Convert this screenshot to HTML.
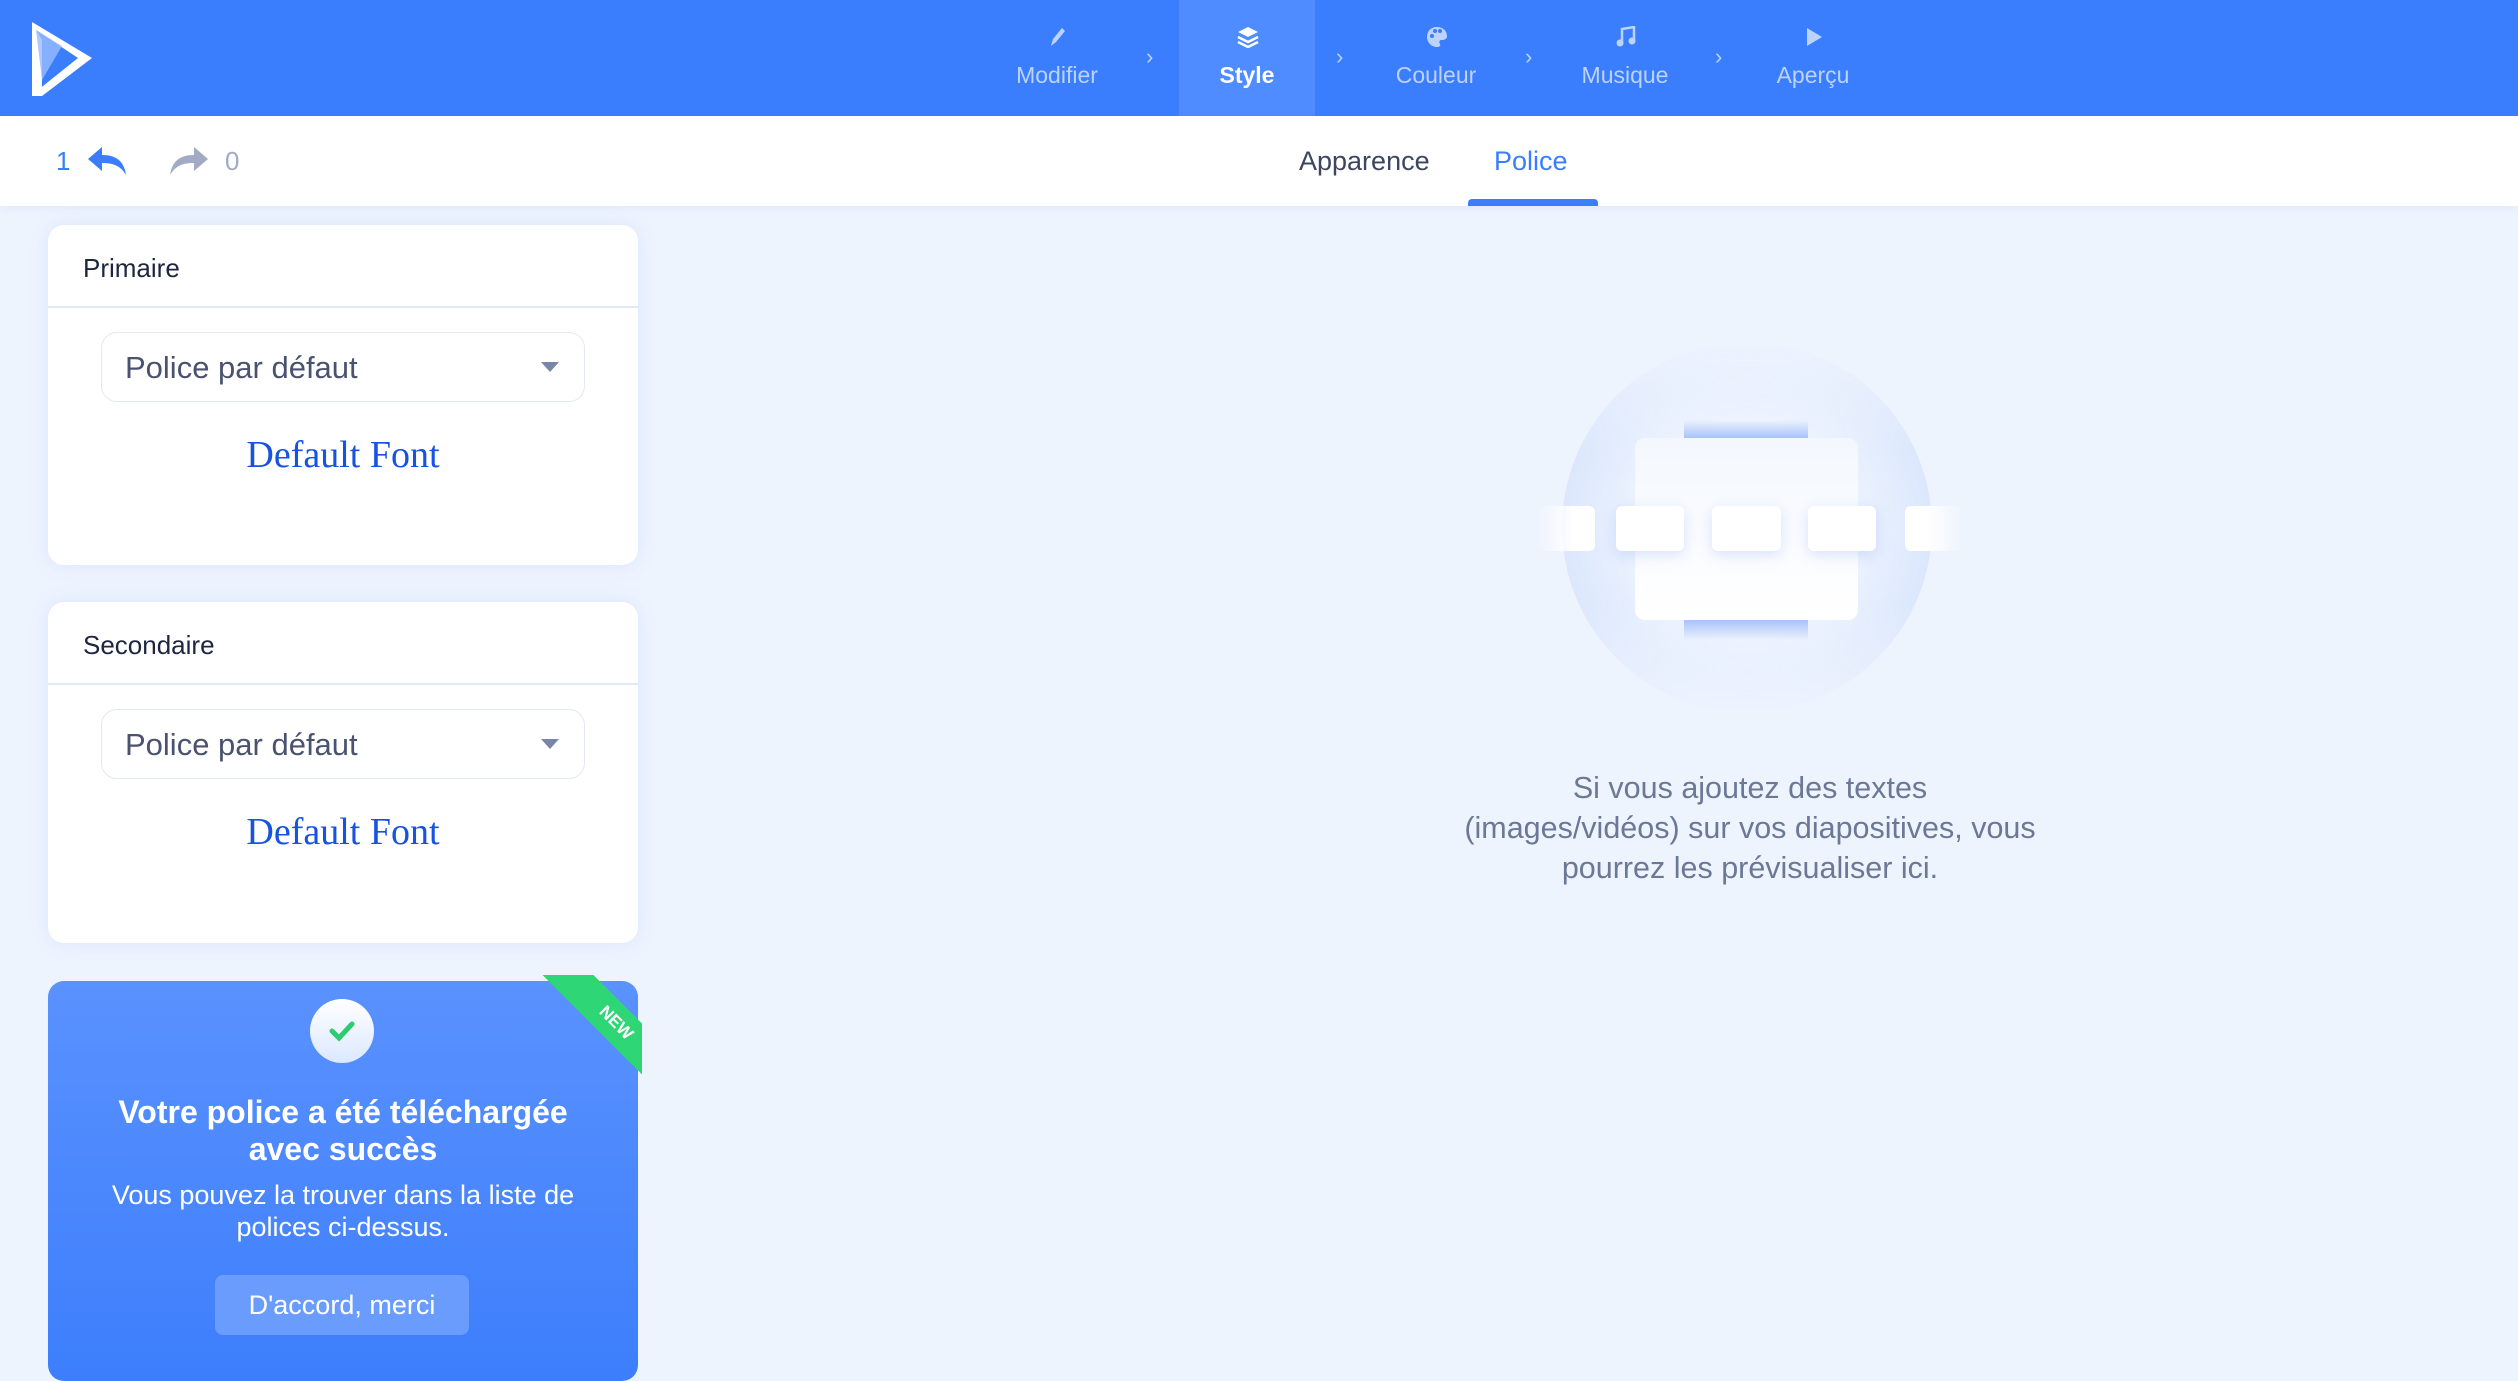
<!DOCTYPE html>
<html><head><meta charset="utf-8"><style>
*{margin:0;padding:0;box-sizing:border-box}
body{width:2518px;height:1356px;overflow:hidden;background:#eef4fe;font-family:"Liberation Sans",sans-serif;position:relative}
.abs{position:absolute}
.hdr{left:0;top:0;width:2518px;height:116px;background:#3a7efe}
.nav{top:0;height:116px;width:136px;color:#bcd3ff;text-align:center;font-size:23px}
.nav .lb{position:absolute;left:0;right:0;top:62px}
.nav svg{position:absolute;left:58px;top:26px}
.chev{top:44px;color:#bcd3ff;font-size:22px}
.sub{left:0;top:116px;width:2518px;height:90px;background:#fff;box-shadow:0 2px 8px rgba(60,100,200,.08)}
.card{left:48px;width:590px;background:#fff;border-radius:16px;box-shadow:0 0 20px rgba(80,130,240,.12)}
.card .t{position:absolute;left:35px;top:28px;font-size:26px;color:#1e2540}
.card .d{position:absolute;left:0;right:0;top:81px;height:2px;background:#e1e8f6}
.sel{position:absolute;left:53px;width:484px;height:70px;top:107px;border:1.5px solid #e3e8f3;border-radius:16px;font-size:31px;color:#4a5270;padding:17px 0 0 23px}
.sel i{position:absolute;right:25px;top:29px;width:0;height:0;border-left:9px solid transparent;border-right:9px solid transparent;border-top:10px solid #7a86a8}
.df{position:absolute;left:0;right:0;top:208px;text-align:center;font-family:"Liberation Serif",serif;font-size:38px;color:#1553e0}
</style></head><body>
<div class="abs hdr"></div>
<svg class="abs" style="left:28px;top:20px" width="70" height="80" viewBox="0 0 70 80"><path d="M4 2 L4 76 L14 76 L14 20 Z" fill="#fff"/><path d="M4 2 L64 38 L14 76 L10 70 L50 38 L8 10Z" fill="#fff"/><path d="M8 10 L34 26 L14 60Z" fill="#9bbcff" opacity=".8"/></svg>
<div class="abs" style="left:1179px;top:0;width:136px;height:116px;background:#4f8cff"></div>
<div class="abs nav" style="left:989px"><svg width="20" height="22" viewBox="0 0 20 22"><path d="M4 20 L6 13 L15 2 L18 5 L9 16 Z" fill="#bcd3ff"/></svg><div class="lb">Modifier</div></div>
<div class="abs nav" style="left:1179px;color:#fff;font-weight:bold"><svg width="22" height="22" viewBox="0 0 22 22"><path d="M11 1 L21 6 L11 11 L1 6Z" fill="#fff"/><path d="M1 11 L11 16 L21 11 M1 16 L11 21 L21 16" stroke="#fff" stroke-width="2.5" fill="none"/></svg><div class="lb">Style</div></div>
<div class="abs nav" style="left:1368px"><svg width="22" height="22" viewBox="0 0 22 22"><path d="M11 1 C17 1 21 5 21 10 C21 14 17 14 15 14 C13 14 13 17 14 18 C15 20 13 21 11 21 C5 21 1 16 1 11 C1 5 5 1 11 1Z" fill="#bcd3ff"/><circle cx="6" cy="10" r="2" fill="#3a7efe"/><circle cx="9" cy="5" r="2" fill="#3a7efe"/><circle cx="14" cy="5" r="2" fill="#3a7efe"/></svg><div class="lb">Couleur</div></div>
<div class="abs nav" style="left:1557px"><svg width="22" height="22" viewBox="0 0 22 22"><path d="M7 17 V3 L19 1 V15" stroke="#bcd3ff" stroke-width="2.5" fill="none"/><circle cx="5" cy="17" r="3.5" fill="#bcd3ff"/><circle cx="17" cy="15" r="3.5" fill="#bcd3ff"/></svg><div class="lb">Musique</div></div>
<div class="abs nav" style="left:1745px"><svg width="22" height="22" viewBox="0 0 22 22"><path d="M4 2 L19 11 L4 20Z" fill="#bcd3ff"/></svg><div class="lb">Aperçu</div></div>
<div class="abs chev" style="left:1146px">›</div><div class="abs chev" style="left:1336px">›</div><div class="abs chev" style="left:1525px">›</div><div class="abs chev" style="left:1715px">›</div>

<div class="abs sub"></div>
<div class="abs" style="left:56px;top:146px;font-size:26px;color:#3a7efe">1</div>
<svg class="abs" style="left:86px;top:145px" width="42" height="32" viewBox="0 0 42 32"><path d="M16 2 L2 14 L16 26 V18 C26 18 34 20 40 30 C38 16 30 10 16 10Z" fill="#3a7efe"/></svg>
<svg class="abs" style="left:168px;top:145px" width="42" height="32" viewBox="0 0 42 32"><path d="M26 2 L40 14 L26 26 V18 C16 18 8 20 2 30 C4 16 12 10 26 10Z" fill="#a2abc5"/></svg>
<div class="abs" style="left:225px;top:146px;font-size:26px;color:#a2abc5">0</div>
<div class="abs" style="left:1299px;top:146px;font-size:27px;color:#3d4660">Apparence</div>
<div class="abs" style="left:1494px;top:146px;font-size:27px;color:#3a7efe">Police</div>
<div class="abs" style="left:1468px;top:199px;width:130px;height:7px;background:#3a7efe;border-radius:4px 4px 0 0"></div>

<div class="abs card" style="top:225px;height:340px"><div class="t">Primaire</div><div class="d"></div><div class="sel">Police par défaut<i></i></div><div class="df">Default Font</div></div>
<div class="abs card" style="top:602px;height:341px"><div class="t">Secondaire</div><div class="d"></div><div class="sel">Police par défaut<i></i></div><div class="df">Default Font</div></div>

<div class="abs" style="left:48px;top:981px;width:590px;height:400px;border-radius:16px;background:linear-gradient(180deg,#5a92fe,#3d7efc);overflow:hidden;color:#fff;text-align:center">
<div style="position:absolute;left:262px;top:18px;width:64px;height:64px;border-radius:50%;background:linear-gradient(#fff,#dce8ff)"><svg width="64" height="64" viewBox="0 0 64 64"><path d="M22 32 L29 39 L42 25" stroke="#2ecc71" stroke-width="5" fill="none" stroke-linecap="round"/></svg></div>
<div style="position:absolute;left:-20px;right:-20px;top:113px;font-size:32px;font-weight:bold;line-height:37px">Votre police a été téléchargée<br>avec succès</div>
<div style="position:absolute;left:-20px;right:-20px;top:198px;font-size:27px;line-height:32px">Vous pouvez la trouver dans la liste de<br>polices ci-dessus.</div>
<div style="position:absolute;left:167px;top:294px;width:254px;height:60px;border-radius:8px;background:#6a9cfd;font-size:27px;line-height:60px">D'accord, merci</div>
</div>
<div class="abs" style="left:530px;top:975px;width:112px;height:110px;overflow:hidden"><div style="position:absolute;left:-10px;top:30px;width:180px;height:36px;background:#2fd676;transform:rotate(45deg);transform-origin:center;color:#fff;font-size:17px;font-weight:bold;text-align:center;line-height:36px;margin-left:6px">NEW</div></div>

<div class="abs" style="left:1562px;top:342px;width:370px;height:370px;border-radius:50%;background:radial-gradient(circle,rgba(238,244,254,0) 40%,rgba(200,218,252,.8) 90%,rgba(200,218,252,.3) 100%);-webkit-mask-image:linear-gradient(180deg,transparent 0%,#000 30%,#000 70%,transparent 100%);mask-image:linear-gradient(180deg,transparent 0%,#000 30%,#000 70%,transparent 100%)"></div>
<div class="abs" style="left:1684px;top:420px;width:124px;height:18px;background:linear-gradient(rgba(168,194,248,0),#a8c2f8)"></div>
<div class="abs" style="left:1684px;top:620px;width:124px;height:20px;background:linear-gradient(#a8c2f8,rgba(168,194,248,0))"></div>
<div class="abs" style="left:1635px;top:438px;width:223px;height:182px;background:linear-gradient(#f4f8fe,#fff);border-radius:10px"></div>
<div class="abs" style="left:1538px;top:506px;width:57px;height:45px;background:linear-gradient(90deg,rgba(255,255,255,0),#fff 60%);border-radius:6px"></div>
<div class="abs" style="left:1616px;top:506px;width:68px;height:45px;background:#fff;border-radius:6px;box-shadow:0 4px 14px rgba(120,150,240,.25)"></div>
<div class="abs" style="left:1712px;top:506px;width:69px;height:45px;background:#fff;border-radius:6px;box-shadow:0 4px 14px rgba(120,150,240,.25)"></div>
<div class="abs" style="left:1808px;top:506px;width:68px;height:45px;background:#fff;border-radius:6px;box-shadow:0 4px 14px rgba(120,150,240,.25)"></div>
<div class="abs" style="left:1905px;top:506px;width:57px;height:45px;background:linear-gradient(90deg,#fff 40%,rgba(255,255,255,0));border-radius:6px"></div>
<div class="abs" style="left:1350px;top:768px;width:800px;text-align:center;font-size:30.5px;line-height:40px;color:#6b7896">Si vous ajoutez des textes<br>(images/vidéos) sur vos diapositives, vous<br>pourrez les prévisualiser ici.</div>
</body></html>
